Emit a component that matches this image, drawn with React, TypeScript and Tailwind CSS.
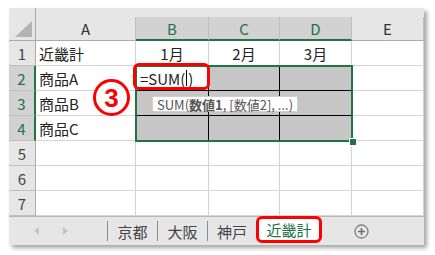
import React from "react";

const cols = ["A", "B", "C", "D", "E"];
const names = ["商品A", "商品B", "商品C"];

// 選択範囲 B2:D4 のセル
function SelCell({ white, text }: { white?: boolean; text?: React.ReactNode }) {
  return (
    <div
      className={`flex items-center pl-[4px] border-r border-b border-black ${
        white ? "bg-white" : "bg-[#c6c6c6]"
      }`}
    >
      {text}
    </div>
  );
}

function Cell({ children, center }: { children?: React.ReactNode; center?: boolean }) {
  return (
    <div
      className={`flex items-center border-r border-b border-[#d4d4d4] bg-white ${
        center ? "justify-center" : "pl-[3px]"
      }`}
    >
      {children}
    </div>
  );
}

function RowHead({ n, sel }: { n: number; sel?: boolean }) {
  return (
    <div
      className={`flex items-center justify-center border-b border-[#bfbfbf] ${
        sel
          ? "bg-[#d2d2d2] text-[#217346] border-r-2 border-r-[#217346]"
          : "bg-[#e6e6e6] text-[#444] border-r border-r-[#ababab]"
      }`}
    >
      {n}
    </div>
  );
}

export default function App() {
  return (
    <div className="w-[435px] h-[255px] bg-white pt-[8px] pl-[9px]">
      <div className="relative w-[415px] bg-white shadow-[3px_3px_4px_rgba(0,0,0,0.35)] font-['Noto_Sans_CJK_JP',sans-serif] text-[15px] text-[#222] leading-none">
        <div className="grid grid-cols-[27px_100px_73px_71px_72px_72px] grid-rows-[9px_24px_repeat(7,25px)]">
          {/* 左上のコーナー */}
          <div className="row-span-2 relative bg-[#e6e6e6] border-r border-b border-[#ababab]">
            <svg className="absolute left-[6px] top-[13px]" width="17" height="16" viewBox="0 0 17 16">
              <polygon points="17,0 17,16 0,16" fill="#b4b4b4" />
            </svg>
          </div>
          <div className="col-span-5 bg-[#e6e6e6]" />

          {/* 列見出し */}
          {cols.map((c) => {
            const sel = c === "B" || c === "C" || c === "D";
            return (
              <div
                key={c}
                className={`flex items-center justify-center border-r border-[#bfbfbf] ${
                  sel
                    ? "bg-[#d2d2d2] text-[#217346] border-b-2 border-b-[#217346]"
                    : "bg-[#e6e6e6] text-[#333] border-b border-b-[#ababab]"
                }`}
              >
                {c}
              </div>
            );
          })}

          {/* 1行目 */}
          <RowHead n={1} />
          <Cell>近畿計</Cell>
          <Cell center>1月</Cell>
          <Cell center>2月</Cell>
          <Cell center>3月</Cell>
          <Cell />

          {/* 2〜4行目 */}
          {names.map((name, i) => (
            <React.Fragment key={name}>
              <RowHead n={i + 2} sel />
              <Cell>{name}</Cell>
              {i === 0 ? (
                <SelCell
                  white
                  text={
                    <span className="flex items-center">
                      =SUM(
                      <span className="inline-block w-px h-[16px] bg-black mx-[1px]" />)
                    </span>
                  }
                />
              ) : (
                <SelCell />
              )}
              <SelCell />
              <SelCell />
              <Cell />
            </React.Fragment>
          ))}

          {[5, 6, 7].map((n) => (
            <React.Fragment key={n}>
              <RowHead n={n} />
              <Cell />
              <Cell />
              <Cell />
              <Cell />
              <Cell />
            </React.Fragment>
          ))}
        </div>

        {/* シートタブ */}
        <div className="flex items-center h-[29px] bg-[#e6e6e6] border-t border-[#b8b8b8] text-[#444]">
          <div className="flex items-center w-[98px]">
            <svg className="ml-[25px]" width="5" height="8" viewBox="0 0 5 8">
              <polygon points="5,0 5,8 0,4" fill="#c4c4c4" />
            </svg>
            <svg className="ml-[24px]" width="5" height="8" viewBox="0 0 5 8">
              <polygon points="0,0 0,8 5,4" fill="#c4c4c4" />
            </svg>
          </div>
          <div className="w-px h-[20px] bg-[#8c8c8c]" />
          <div className="w-[49px] text-center">京都</div>
          <div className="w-px h-[20px] bg-[#8c8c8c]" />
          <div className="w-[49px] text-center">大阪</div>
          <div className="w-px h-[20px] bg-[#8c8c8c]" />
          <div className="w-[48px] text-center">神戸</div>
          <div className="self-start mt-[-1px] w-[66px] h-[27px] flex items-center justify-center bg-white border-[3px] border-[#ff0000] rounded-[6px] text-[#217346]">
            近畿計
          </div>
          <svg className="ml-[32px]" width="15" height="15" viewBox="0 0 15 15">
            <circle cx="7.5" cy="7.5" r="6.5" fill="none" stroke="#808080" strokeWidth="1.3" />
            <path d="M7.5 4v7M4 7.5h7" stroke="#707070" strokeWidth="1.6" />
          </svg>
        </div>

        {/* 選択範囲の枠 */}
        <div className="absolute left-[126px] top-[57px] w-[218px] h-[77px] border-2 border-[#217346]" />
        <div className="absolute left-[340px] top-[130px] w-[8px] h-[8px] bg-[#217346] border border-white" />

        {/* 赤枠 */}
        <div className="absolute left-[124px] top-[55px] w-[77px] h-[27px] border-[3px] border-[#ff0000] rounded-[6px]" />

        {/* ③ */}
        <div className="absolute left-[84px] top-[71px] w-[37px] h-[37px] rounded-full border-[3px] border-[#ff0000] bg-white flex items-center justify-center font-['Liberation_Sans',sans-serif] font-bold text-[26px] text-[#ff0000]">
          3
        </div>

        {/* ツールチップ */}
        <div className="absolute left-[143px] top-[88px] h-[16px] px-[4px] flex items-center bg-white border border-[#cfcfcf] text-[13px] text-[#555] whitespace-nowrap">
          SUM(<span className="font-semibold">数値1</span>, [数値2], ...)
        </div>
      </div>
    </div>
  );
}
